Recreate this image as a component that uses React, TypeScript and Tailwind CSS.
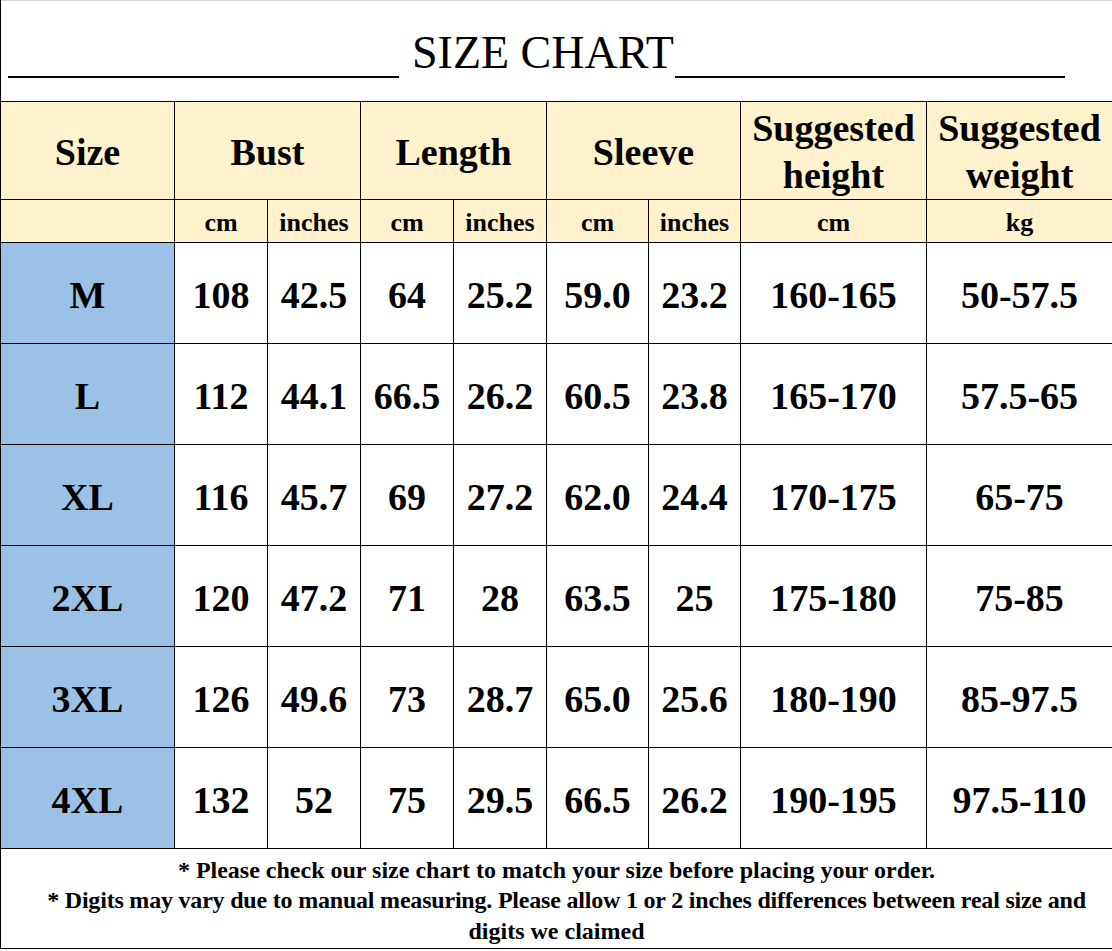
import React from "react";

const rows: string[][] = [
  ["M", "108", "42.5", "64", "25.2", "59.0", "23.2", "160-165", "50-57.5"],
  ["L", "112", "44.1", "66.5", "26.2", "60.5", "23.8", "165-170", "57.5-65"],
  ["XL", "116", "45.7", "69", "27.2", "62.0", "24.4", "170-175", "65-75"],
  ["2XL", "120", "47.2", "71", "28", "63.5", "25", "175-180", "75-85"],
  ["3XL", "126", "49.6", "73", "28.7", "65.0", "25.6", "180-190", "85-97.5"],
  ["4XL", "132", "52", "75", "29.5", "66.5", "26.2", "190-195", "97.5-110"],
];

const serif = { fontFamily: '"Liberation Serif", "Times New Roman", serif' };

export default function App() {
  return (
    <div className="w-[1112px] h-[951px] bg-white text-black overflow-hidden" style={serif}>
      <div className="border-l border-black">
        {/* Title */}
        <div className="h-[101px] border-t border-[#d4d4d4] flex items-start pl-[7px]">
          <div className="mt-[75px] w-[391px] h-[2px] bg-black" />
          <div className="ml-[13px] mt-[26px] text-[46px] leading-[52px] font-normal whitespace-nowrap">
            SIZE CHART
          </div>
          <div className="mt-[75px] ml-[1px] w-[390px] h-[2px] bg-black" />
        </div>
        {/* Table */}
        <div className="grid grid-cols-[173px_92px_92px_92px_92px_101px_91px_185px_185px] grid-rows-[97px_42px_100px_100px_100px_100px_100px_100px_99px] gap-px bg-black border-t border-b border-black font-bold">
          <div className="bg-[#fff2cc] flex items-center justify-center text-[38px] pt-[4px]">Size</div>
          <div className="col-span-2 bg-[#fff2cc] flex items-center justify-center text-[38px] pt-[4px]">Bust</div>
          <div className="col-span-2 bg-[#fff2cc] flex items-center justify-center text-[38px] pt-[4px]">Length</div>
          <div className="col-span-2 bg-[#fff2cc] flex items-center justify-center text-[38px] pt-[4px]">Sleeve</div>
          <div className="bg-[#fff2cc] flex items-center justify-center text-center text-[38px] leading-[47px] pt-[3px]">
            Suggested
            <br />
            height
          </div>
          <div className="bg-[#fff2cc] flex items-center justify-center text-center text-[38px] leading-[47px] pt-[3px]">
            Suggested
            <br />
            weight
          </div>

          <div className="bg-[#fff2cc]" />
          {["cm", "inches", "cm", "inches", "cm", "inches", "cm", "kg"].map((u, i) => (
            <div key={i} className="bg-[#fff2cc] flex items-center justify-center text-[26px] pt-[2px]">
              {u}
            </div>
          ))}

          {rows.map((r, ri) =>
            r.map((c, ci) => (
              <div
                key={ri + "-" + ci}
                className={
                  (ci === 0 ? "bg-[#9bc2e6] " : "bg-white ") +
                  "flex items-center justify-center text-[38px] pt-[4px] whitespace-nowrap"
                }
              >
                {c}
              </div>
            ))
          )}

          <div className="col-span-9 bg-white flex flex-col items-center justify-center text-center text-[24px] leading-[30.5px] pt-[4px]">
            <div className="whitespace-nowrap">
              * Please check our size chart to match your size before placing your order.
            </div>
            <div className="whitespace-nowrap tracking-[-0.2px] pl-[20px]">
              * Digits may vary due to manual measuring. Please allow 1 or 2 inches differences between real size and
            </div>
            <div className="whitespace-nowrap">digits we claimed</div>
          </div>
        </div>
      </div>
    </div>
  );
}
